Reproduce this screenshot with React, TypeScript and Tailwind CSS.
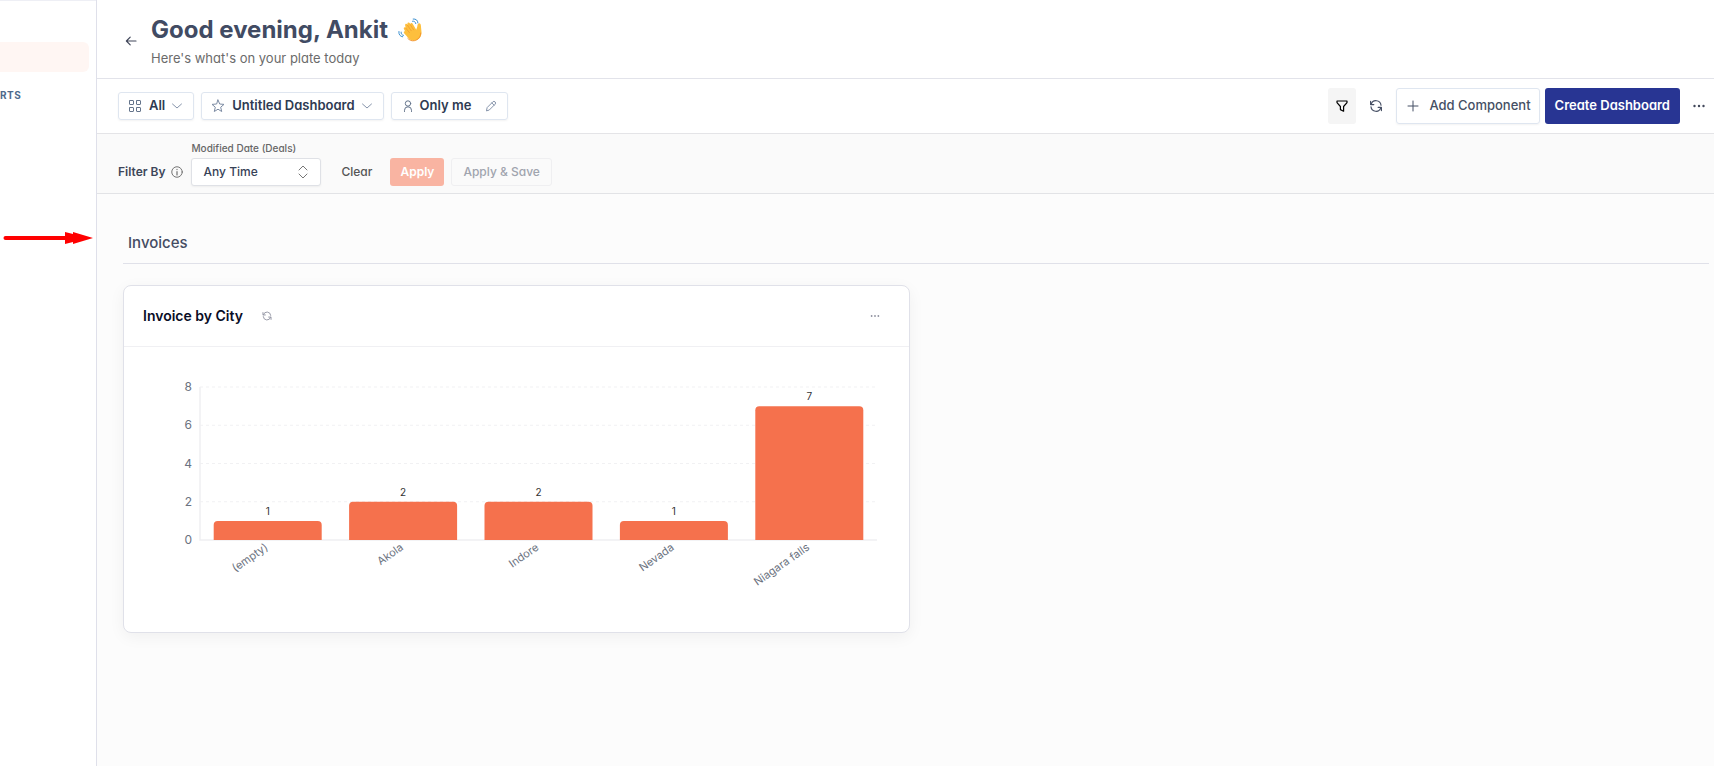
import type { ReactNode } from 'react'

type Bar = {
  city: string
  count: number
}

const bars: Bar[] = [
  { city: '(empty)', count: 1 },
  { city: 'Akola', count: 2 },
  { city: 'Indore', count: 2 },
  { city: 'Nevada', count: 1 },
  { city: 'Niagara falls', count: 7 },
]

const ticks = [0, 2, 4, 6, 8]

// chart geometry, in viewBox units
const left = 76
const right = 753
const top = 40
const bottom = 193
const barWidth = 108
const step = (right - left) / bars.length
const yFor = (value: number) => bottom - ((bottom - top) * value) / 8

function Icon({ className, children }: { className: string; children: ReactNode }) {
  return (
    <svg
      viewBox="0 0 16 16"
      fill="none"
      stroke="currentColor"
      strokeLinecap="round"
      strokeLinejoin="round"
      aria-hidden="true"
      className={`shrink-0 ${className}`}
    >
      {children}
    </svg>
  )
}

function ChevronDown() {
  return (
    <Icon className="size-4 text-[#8694ab]">
      <path d="M3.5 6 8 10l4.5-4" />
    </Icon>
  )
}

function RefreshIcon({ className }: { className: string }) {
  return (
    <Icon className={className}>
      <path d="M3.2 6.4A5 5 0 0 1 13 7.2M12.8 9.6A5 5 0 0 1 3 8.8" strokeWidth="1.2" />
      <path d="M2.6 3.4v3.2h3.2M13.4 12.6V9.4h-3.2" strokeWidth="1.2" />
    </Icon>
  )
}

function DotsIcon({ className }: { className: string }) {
  return (
    <Icon className={className}>
      <g fill="currentColor" stroke="none">
        <circle cx="3.5" cy="8" r="1.2" />
        <circle cx="8" cy="8" r="1.2" />
        <circle cx="12.5" cy="8" r="1.2" />
      </g>
    </Icon>
  )
}

function WaveIcon() {
  return (
    <svg viewBox="0 0 24 24" aria-label="waving hand" role="img" className="size-6">
      <path
        d="M7.2 13.6 5.9 10.9c-.6-1.4 1-2.3 1.8-1.1l-.6-2.5c-.3-1.5 1.5-2.1 2.3-.9l.2.4-.2-1c0-1.5 1.7-1.8 2.4-.6l.5 1c.1-1.4 1.7-1.6 2.4-.5l3.5 6 1.1-3.3c.3-1.2.1-2.5 1.3-3 1.4-.5 2.3.7 2.3 2.3l.6 6.3c.3 4.4-2.6 7.8-6.1 8.5-3.2.6-5.3-.6-7.3-2.8l-4-4.5c-.8-1.2.1-2.5 1.1-1.6z"
        fill="#fdbf3d"
      />
      <path
        d="m9.5 7.3 3.7 5.4M12.4 6.8l3.2 5M7.6 9.9l3.8 4.7"
        stroke="#ee9730"
        strokeWidth=".7"
        strokeLinecap="round"
        fill="none"
      />
      <path d="M9.5 20.1c2 2.2 4.1 3 6.8 2.6 3.8-.7 6.5-4 6.4-8" stroke="#f2922c" strokeWidth=".9" fill="none" />
      <path
        d="M14.5 3.2c1.8-.3 3 .7 3.3 2.4M15.2 1c2.8-.3 4.6 1.3 4.7 3.9M3.1 14.1c-.2 1.7.7 3 2.4 3.3M.9 13.5c-.4 3 1.2 5 3.8 5.3"
        stroke="#3d91d1"
        strokeLinecap="round"
        fill="none"
      />
    </svg>
  )
}

function Sidebar() {
  return (
    <aside className="w-[97px] shrink-0 border-r border-[#dfe0ea] bg-white">
      <div className="border-t border-[#eeeff5] pt-[41px]">
        <div className="mr-[7px] h-[30px] rounded-r-md bg-[#fff6f3]" />
        <p className="mt-[15px] text-[10px] leading-4 font-bold tracking-wider text-[#4f6a8c]">RTS</p>
      </div>
      <svg viewBox="0 0 92 14" className="mt-32 ml-[3px] h-[14px] w-[92px]" aria-hidden="true">
        <path d="M2.5 7H66" stroke="#f00" strokeWidth="4" strokeLinecap="round" />
        <path d="M62 1 70 3V1l20 6-20 6v-2l-8 2z" fill="#f00" />
      </svg>
    </aside>
  )
}

function Header() {
  return (
    <header className="flex items-center gap-3 border-b border-[#e2e3ea] bg-white px-[26px] pt-3 pb-[9px]">
      <button type="button" aria-label="Back" className="text-[#41475a]">
        <Icon className="size-4">
          <path d="M13 8H3.5M7.2 4.2 3.4 8l3.8 3.8" strokeWidth="1.2" />
        </Icon>
      </button>
      <div>
        <h1 className="flex items-center gap-2.5 text-2xl leading-9 font-bold text-[#414b63]">
          Good evening, Ankit
          <WaveIcon />
        </h1>
        <p className="text-[13px] leading-[21px] text-[#6b6b6b]">Here's what's on your plate today</p>
      </div>
    </header>
  )
}

function Toolbar() {
  return (
    <div className="flex items-center justify-between border-b border-[#e4e4e7] bg-white py-[9px] pr-[7px] pl-[21px] text-[13px] font-semibold text-[#2e3a52]">
      <div className="flex items-center gap-[7px]">
        <button type="button" className="flex h-7 items-center gap-1 rounded-[3px] border border-[#dfe6f0] px-2 shadow-xs">
          <Icon className="mr-0.5 size-4 text-[#64748b]">
            <rect x="2.5" y="2.5" width="4" height="4" rx=".5" />
            <rect x="9.5" y="2.5" width="4" height="4" rx=".5" />
            <rect x="2.5" y="9.5" width="4" height="4" rx=".5" />
            <rect x="9.5" y="9.5" width="4" height="4" rx=".5" />
          </Icon>
          All
          <ChevronDown />
        </button>
        <button type="button" className="flex h-7 items-center gap-1 rounded-[3px] border border-[#dfe6f0] px-2 shadow-xs">
          <Icon className="mr-0.5 size-4 text-[#7c8ba3]">
            <path d="m8 2 1.7 4 4.3.4-3.3 2.8 1 4.3L8 11.2l-3.7 2.3 1-4.3L2 6.4 6.3 6z" />
          </Icon>
          Untitled Dashboard
          <ChevronDown />
        </button>
        <div className="flex h-7 items-center rounded-[3px] border border-[#dfe6f0] px-2 shadow-xs">
          <Icon className="mr-1 size-4 text-[#64748b]">
            <circle cx="8" cy="5.5" r="2.7" />
            <path d="M4.5 13.5v-1.2a3.5 3.5 0 0 1 7 0v1.2" />
          </Icon>
          Only me
          <button type="button" aria-label="Edit sharing" className="ml-3 text-[#8694ab]">
            <Icon className="size-4">
              <path d="m3.5 12.5.7-3 5.6-5.6a1.6 1.6 0 0 1 2.3 2.3l-5.6 5.6zM8.8 4.9l2.3 2.3" />
            </Icon>
          </button>
        </div>
      </div>

      <div className="flex items-center">
        <button
          type="button"
          aria-label="Filter"
          className="flex h-9 w-7 items-center justify-center rounded-[3px] bg-[#f5f5f5] text-black"
        >
          <Icon className="size-4">
            <path d="M3 3h10v1.6L9.6 8.5v4.7l-3.2-1.6V8.5L3 4.6z" strokeWidth="1.2" />
          </Icon>
        </button>
        <button type="button" aria-label="Refresh" className="mx-3 text-[#475065]">
          <RefreshIcon className="size-4" />
        </button>
        <button
          type="button"
          className="flex h-9 items-center gap-2 rounded-[3px] border border-[#dfe6f0] px-2 font-medium text-[#454f64] shadow-xs"
        >
          <Icon className="size-4">
            <path d="M8 3v10M3 8h10" />
          </Icon>
          Add Component
        </button>
        <button type="button" className="ml-[5px] h-9 rounded-[3px] bg-[#283593] px-2.5 text-white">
          Create Dashboard
        </button>
        <button type="button" aria-label="More actions" className="ml-[11px] text-[#41475a]">
          <DotsIcon className="size-4" />
        </button>
      </div>
    </div>
  )
}

function FilterBar() {
  return (
    <form className="flex items-end border-b border-[#e2e3e6] bg-[#fafafa] pt-[6px] pb-[7px] pl-[21px] text-xs font-medium">
      <div className="flex h-7 items-center gap-1.5 font-semibold text-[#3d4659]">
        Filter By
        <Icon className="size-3 text-[#666]">
          <circle cx="8" cy="8" r="7" strokeWidth="1.2" />
          <path d="M8 7.5V12M8 4.5v.3" strokeWidth="1.5" />
        </Icon>
      </div>
      <div className="ml-2">
        <label htmlFor="modified" className="mb-0.5 block text-[10px] leading-4 text-[#666]">
          Modified Date (Deals)
        </label>
        <div className="relative">
          <select
            id="modified"
            className="h-7 w-[130px] appearance-none rounded-[3px] border border-[#dfe1e6] bg-white pl-[11px] text-[#374257] shadow-xs"
          >
            <option>Any Time</option>
          </select>
          <Icon className="pointer-events-none absolute top-1.5 right-2.5 size-4 text-[#777]">
            <path d="m4 6 4-4 4 4M4 10l4 4 4-4" />
          </Icon>
        </div>
      </div>
      <button type="button" className="ml-2.5 h-7 px-2.5 text-[#555]">
        Clear
      </button>
      <button type="button" disabled className="ml-2 h-7 rounded-[3px] bg-[#f9b4a2] px-2.5 font-semibold text-white">
        Apply
      </button>
      <button
        type="button"
        disabled
        className="ml-[7px] h-7 rounded-[3px] border border-[#efeff1] px-[11px] text-[#a0a4ae]"
      >
        Apply &amp; Save
      </button>
    </form>
  )
}

function BarChart() {
  return (
    <svg viewBox="0 0 785 285" role="img" aria-label="Invoice by City" className="block w-full">
      {ticks.map((tick) => (
        <g key={tick}>
          {tick > 0 && (
            <path d={`M${left} ${yFor(tick)}H${right}`} stroke="#f1f1f3" strokeDasharray="3 3" />
          )}
          <text x={left - 8} y={yFor(tick) + 4} textAnchor="end" fontSize="12" fill="#6b7280">
            {tick}
          </text>
        </g>
      ))}
      <path d={`M${left} ${top}V${bottom}H${right}`} stroke="#efeff2" strokeWidth="1.5" fill="none" />
      {bars.map((bar, i) => {
        const center = left + step * (i + 0.5)
        const x = center - barWidth / 2
        const y = yFor(bar.count)
        return (
          <g key={bar.city}>
            <path
              d={`M${x} ${bottom}V${y + 4}q0-4 4-4h${barWidth - 8}q4 0 4 4V${bottom}z`}
              fill="#f5714d"
            />
            <text x={center} y={y - 6} textAnchor="middle" fontSize="10" fill="#333">
              {bar.count}
            </text>
            <text
              transform={`translate(${center + 1} ${bottom + 9}) rotate(-35)`}
              textAnchor="end"
              fontSize="11"
              fill="#6b7280"
            >
              {bar.city}
            </text>
          </g>
        )
      })}
    </svg>
  )
}

function ChartCard() {
  return (
    <article className="rounded-lg border border-[#e0e1e9] bg-white shadow-[0_4px_16px_rgba(0,0,0,0.05)]">
      <div className="flex h-[61px] items-center border-b border-[#f0f0f3] pr-7 pl-[19px]">
        <h3 className="text-sm font-semibold text-[#0a0d26]">Invoice by City</h3>
        <button type="button" aria-label="Refresh chart" className="ml-[18px] text-[#9092a0]">
          <RefreshIcon className="size-3" />
        </button>
        <button type="button" aria-label="Chart options" className="ml-auto text-[#9092a0]">
          <DotsIcon className="size-3" />
        </button>
      </div>
      <BarChart />
    </article>
  )
}

export default function App() {
  return (
    <div className="flex min-h-screen bg-[#fcfcfc] font-[Inter,sans-serif]">
      <Sidebar />
      <main className="min-w-0 flex-1">
        <div className="[font-feature-settings:'cv11']">
          <Header />
          <Toolbar />
          <FilterBar />
        </div>
        <section className="pt-8 pr-[5px] pl-[26px]">
          <h2 className="border-b border-[#e0e1e9] px-[5px] pt-[5px] pb-2 text-[15px] leading-6 font-medium text-[#454c63]">
            Invoices
          </h2>
          <div className="mt-[21px] grid grid-cols-2 gap-3">
            <ChartCard />
          </div>
        </section>
      </main>
    </div>
  )
}
